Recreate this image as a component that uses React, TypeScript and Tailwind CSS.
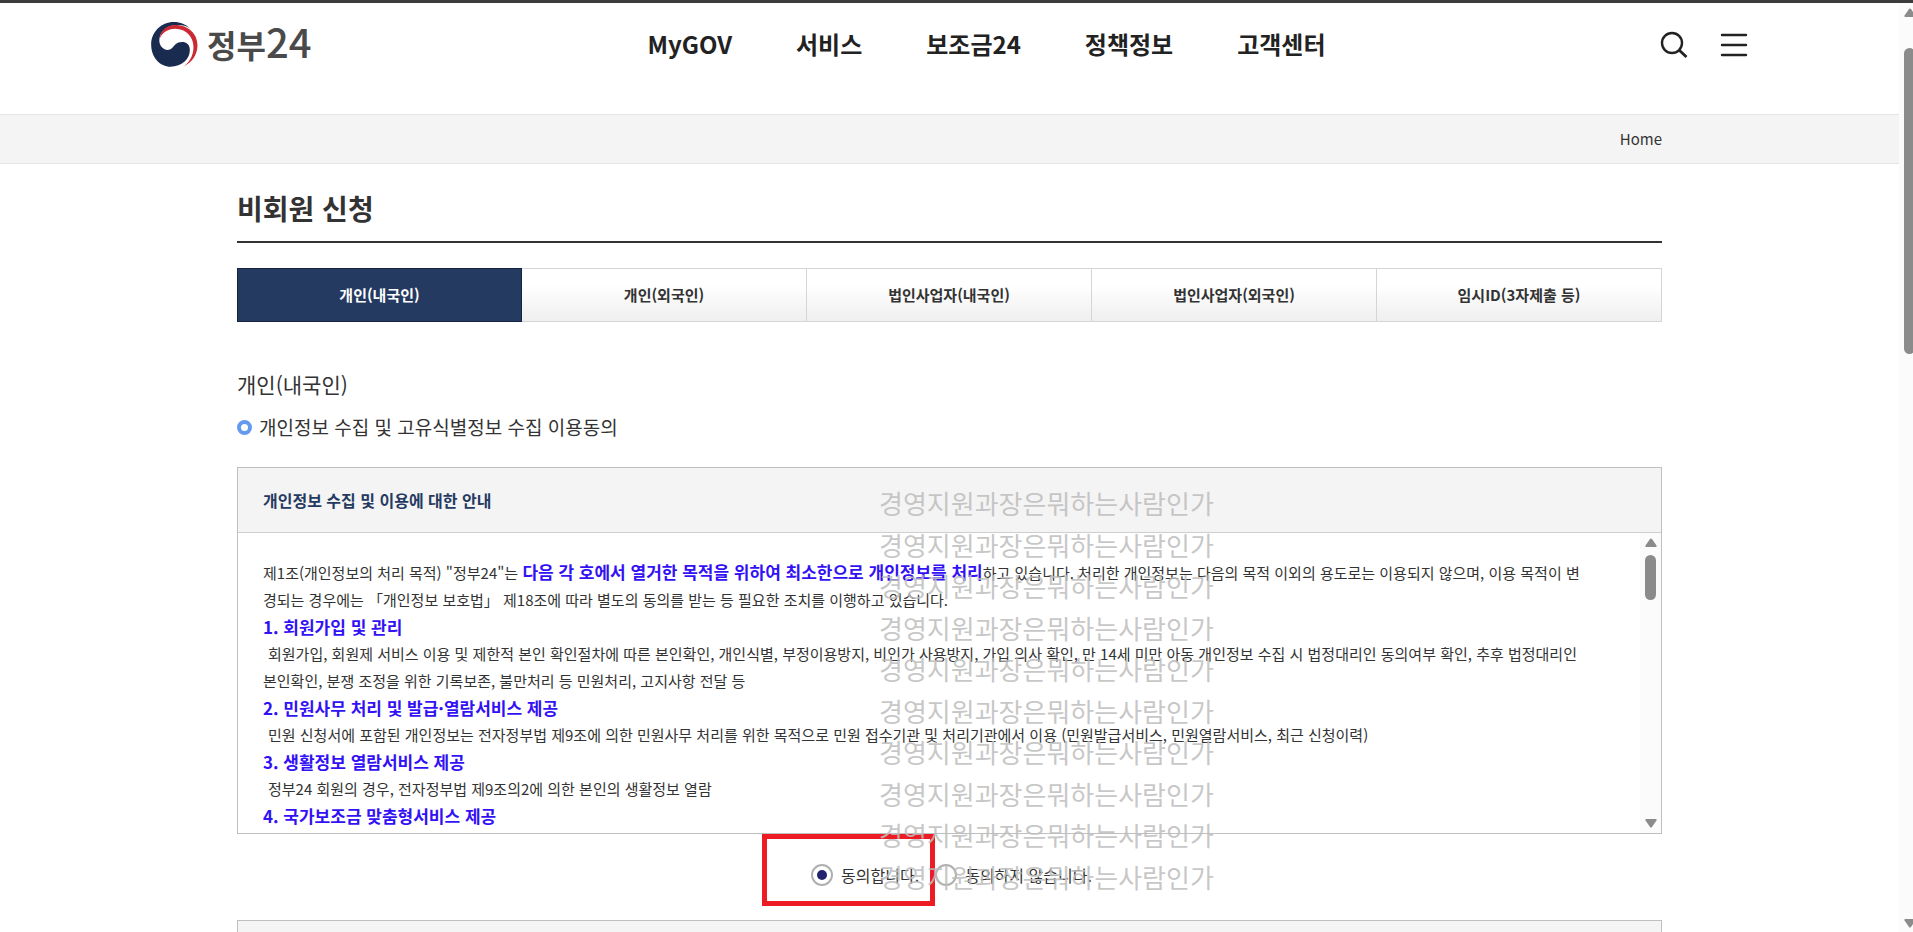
import React, { useState } from 'react';

type Consent = 'agree' | 'disagree';

const NAV_ITEMS = ['MyGOV', '서비스', '보조금24', '정책정보', '고객센터'];

const TABS = [
  '개인(내국인)',
  '개인(외국인)',
  '법인사업자(내국인)',
  '법인사업자(외국인)',
  '임시ID(3자제출 등)',
];

const WATERMARK = '경영지원과장은뭐하는사람인가';

const Logo: React.FC = () => (
  <a href="#home" aria-label="정부24" className="flex h-[45px] items-center gap-[9px] text-[#4a4a4b]">
    <svg viewBox="0 0 140 135" className="h-[45px] w-[47px]" aria-hidden="true">
      <path
        fill="#192c50"
        d="M118 20C104 7 88 0 68 0C30 0 0 30 0 68C0 106 27 134 58 134C92 134 116 112 116 84C116 68 106 60 92 60C76 60 70 70 63 78C56 85 44 86 36 79C26 71 22 58 26 44C32 22 54 9 78 9C94 9 108 12 118 20Z"
      />
      <path
        fill="#cb2a33"
        d="M26 50C30 34 50 20 72 20C106 20 127 45 127 75C127 103 112 124 96 134C120 124 139 100 139 70C139 36 112 9 72 9C44 9 26 30 26 50Z"
      />
    </svg>
    <span className="flex items-baseline pb-2 leading-none">
      <span className="text-[32px] font-bold">정부</span>
      <span className="text-[40px] font-medium">24</span>
    </span>
  </a>
);

const Header: React.FC = () => (
  <header className="mx-auto flex h-[111px] w-full max-w-[1597px] items-start pt-[19px]">
    <Logo />
    <nav className="ml-[336px] flex gap-16 pt-1">
      {NAV_ITEMS.map((item) => (
        <a key={item} href="#menu" className="text-2xl leading-[36px] font-bold text-[#222]">
          {item}
        </a>
      ))}
    </nav>
    <div className="ml-auto flex gap-8 pt-2">
      <button type="button" aria-label="검색">
        <svg viewBox="0 0 28 28" className="size-7" fill="none" stroke="#222" strokeWidth="2.4">
          <circle cx="12" cy="13" r="10" />
          <path d="M19 20L26.500 27" strokeWidth="2.800" />
        </svg>
      </button>
      <button type="button" aria-label="전체메뉴">
        <svg viewBox="0 0 28 28" className="size-7" stroke="#222" strokeWidth="2.4" strokeLinecap="round">
          <path d="M2 5H26M2 15H26M2 25H26" />
        </svg>
      </button>
    </div>
  </header>
);

const Arrow: React.FC<{ down?: boolean }> = ({ down }) => (
  <svg viewBox="0 0 12 9" className="h-[9px] w-3 shrink-0" fill="#8b8b8b" aria-hidden="true">
    {down ? (
      <path d="M1 0H11Q12 .5 11.500 1.500L7 8Q6 9 5 8L.5 1.500Q0 .5 1 0Z" />
    ) : (
      <path d="M1 9H11Q12 8.500 11.500 7.500L7 1Q6 0 5 1L.5 7.500Q0 8.500 1 9Z" />
    )}
  </svg>
);

const Tabs: React.FC = () => {
  const [active, setActive] = useState(0);

  return (
    <div role="tablist" className="mt-[25px] grid grid-cols-5">
      {TABS.map((tab, i) => (
        <button
          key={tab}
          type="button"
          role="tab"
          aria-selected={i === active}
          onClick={() => setActive(i)}
          className={
            i === active
              ? 'h-[54px] border border-[#14233f] bg-[#243a60] text-[15px] font-bold text-white'
              : 'h-[54px] border border-l-0 border-[#d5d5d5] bg-linear-to-b from-white from-30% to-[#efefef] text-[15px] font-bold text-[#333]'
          }
        >
          {tab}
        </button>
      ))}
    </div>
  );
};

const Item: React.FC<{ title: string; children?: React.ReactNode }> = ({ title, children }) => (
  <>
    <h4 className="text-[17px] font-bold text-[#3311f5]">{title}</h4>
    {children && <p className="whitespace-nowrap indent-[5px]">{children}</p>}
  </>
);

const Terms: React.FC = () => (
  <section className="mt-[26px] border border-[#bfbfbf]">
    <h3 className="border-b border-[#cfcfcf] bg-[#f4f4f4] px-[25px] leading-[64px] font-bold text-[#253a61]">
      개인정보 수집 및 이용에 대한 안내
    </h3>
    <div className="flex h-[300px]">
      <div className="min-w-0 flex-1 overflow-hidden pt-[25px] pl-[25px] text-[15px] leading-[27px]">
        <p className="whitespace-nowrap">
          제1조(개인정보의 처리 목적) "정부24"는{' '}
          <strong className="text-[17px] font-bold text-[#3311f5]">
            다음 각 호에서 열거한 목적을 위하여 최소한으로 개인정보를 처리
          </strong>
          하고 있습니다. 처리한 개인정보는 다음의 목적 이외의 용도로는 이용되지 않으며, 이용 목적이 변
          <br />
          경되는 경우에는 「개인정보 보호법」 제18조에 따라 별도의 동의를 받는 등 필요한 조치를 이행하고 있습니다.
        </p>
        <Item title="1. 회원가입 및 관리">
          회원가입, 회원제 서비스 이용 및 제한적 본인 확인절차에 따른 본인확인, 개인식별, 부정이용방지, 비인가
          사용방지, 가입 의사 확인, 만 14세 미만 아동 개인정보 수집 시 법정대리인 동의여부 확인, 추후 법정대리인
          <br />
          본인확인, 분쟁 조정을 위한 기록보존, 불만처리 등 민원처리, 고지사항 전달 등
        </Item>
        <Item title="2. 민원사무 처리 및 발급·열람서비스 제공">
          민원 신청서에 포함된 개인정보는 전자정부법 제9조에 의한 민원사무 처리를 위한 목적으로 민원 접수기관 및
          처리기관에서 이용 (민원발급서비스, 민원열람서비스, 최근 신청이력)
        </Item>
        <Item title="3. 생활정보 열람서비스 제공">
          정부24 회원의 경우, 전자정부법 제9조의2에 의한 본인의 생활정보 열람
        </Item>
        <Item title="4. 국가보조금 맞춤형서비스 제공" />
      </div>
      <div className="flex w-[21px] flex-col items-center bg-[#fbfbfb] py-[5px]">
        <Arrow />
        <div className="mt-2 h-[45px] w-[11px] rounded-full bg-[#8b8b8b]" />
        <div className="flex-1" />
        <Arrow down />
      </div>
    </div>
  </section>
);

const RADIO_CLASS =
  'size-[22px] appearance-none rounded-full border-2 border-[#b0b0b0] bg-white flex items-center justify-center checked:before:block checked:before:size-[10px] checked:before:rounded-full checked:before:bg-[#22226e]';

const ConsentRow: React.FC = () => {
  const [consent, setConsent] = useState<Consent>('agree');

  return (
    <div className="flex h-[86px] items-center justify-center gap-4 pb-1 pl-1">
      <div className="relative flex items-center gap-2">
        <input
          id="agree"
          type="radio"
          name="consent"
          className={RADIO_CLASS}
          checked={consent === 'agree'}
          onChange={() => setConsent('agree')}
        />
        <label htmlFor="agree">동의합니다.</label>
        {/* highlight around the answer to pick */}
        <div className="pointer-events-none absolute -top-[29px] -left-[49px] h-[72px] w-[173px] border-[5px] border-[#ed1c24]" />
      </div>
      <div className="flex items-center gap-2">
        <input
          id="disagree"
          type="radio"
          name="consent"
          className={RADIO_CLASS}
          checked={consent === 'disagree'}
          onChange={() => setConsent('disagree')}
        />
        <label htmlFor="disagree">동의하지 않습니다.</label>
      </div>
    </div>
  );
};

const Watermark: React.FC = () => (
  <div
    aria-hidden="true"
    className="pointer-events-none absolute top-[20px] left-[642px] flex h-[406px] flex-col justify-between text-[26px] leading-8 whitespace-nowrap text-[#bdbdbd]/85"
  >
    {Array.from({ length: 10 }, (_, i) => (
      <span key={i}>{WATERMARK}</span>
    ))}
  </div>
);

const App: React.FC = () => (
  <div
    lang="ko"
    className="flex h-screen overflow-hidden border-t-[3px] border-[#3d3b3b] bg-white font-['Noto_Sans_CJK_KR','Noto_Sans',sans-serif] text-base text-[#333]"
  >
    <div className="min-w-0 flex-1">
      <Header />
      <div className="border-y border-[#e4e4ea] bg-[#f4f4f4]">
        <div className="mx-auto flex max-w-[1425px] justify-end">
          <a href="#home" className="text-[15px] leading-[48px]">
            Home
          </a>
        </div>
      </div>

      <main className="mx-auto max-w-[1425px]">
        <h1 className="border-b-2 border-[#333] pt-[23px] pb-3 text-[28px] leading-[42px] font-bold">
          비회원 신청
        </h1>
        <Tabs />
        <h2 className="mt-[46px] text-[21px] leading-8">개인(내국인)</h2>
        <p className="mt-[13px] flex items-center gap-[7px] text-[19px] leading-7">
          <span className="size-[15px] rounded-full border-4 border-[#639af0]" />
          개인정보 수집 및 고유식별정보 수집 이용동의
        </p>

        <div className="relative">
          <Terms />
          <ConsentRow />
          <Watermark />
        </div>

        <section className="h-[67px] border border-[#bfbfbf] bg-[#f4f4f4]" />
      </main>
    </div>

    <div className="flex w-[14px] flex-col items-start overflow-hidden bg-[#fbfbfb] pt-[5px] pb-1 pl-[5px]">
      <Arrow />
      <div className="mt-[31px] h-[306px] w-[11px] shrink-0 rounded-full bg-[#8b8b8b]" />
      <div className="flex-1" />
      <Arrow down />
    </div>
  </div>
);

export default App;
